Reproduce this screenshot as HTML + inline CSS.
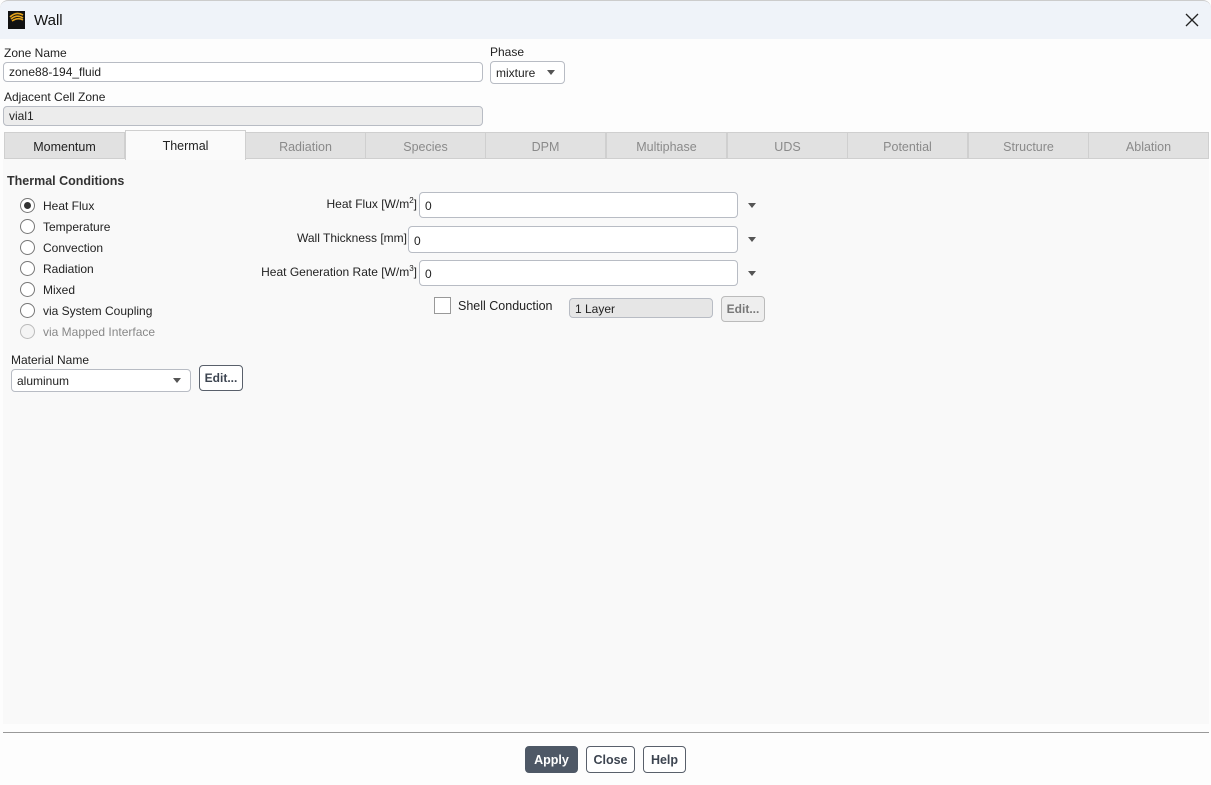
<!DOCTYPE html>
<html><head><meta charset="utf-8"><style>
*{box-sizing:border-box;margin:0;padding:0}
body{width:1211px;height:785px;overflow:hidden;background:#fdfdfd;font-family:"Liberation Sans",sans-serif;font-size:12px;color:#222;position:relative}
.a{position:absolute;white-space:nowrap}
.in{position:absolute;border:1px solid #b8bcc4;border-radius:4px;background:#fff;padding-left:5px;line-height:18px}
.tab{position:absolute;top:132px;height:27px;width:121px;border:1px solid #cfcfcf;background:#e1e1e1;color:#8a8a8a;text-align:center;line-height:29px;font-size:12.5px}
.rad{position:absolute;left:20px;width:15px;height:15px;border:1px solid #777;border-radius:50%;background:#fff}
.rl{position:absolute;left:43px}
.dd{position:absolute;width:0;height:0;border-left:4px solid transparent;border-right:4px solid transparent;border-top:5px solid #555}
.btn{position:absolute;border:1px solid #59606b;border-radius:4px;background:#fff;font-weight:bold;text-align:center;color:#3c4450;font-size:12.5px}
.lb{position:absolute;white-space:nowrap;text-align:right}
</style></head><body>
<div class="a" style="left:0;top:0;width:1211px;height:39px;background:#eff3f9;border-radius:8px 8px 0 0;border-top:1px solid #ccc"></div>
<div class="a" style="left:8px;top:11px;width:17px;height:18px;background:#111"></div>
<svg class="a" style="left:8px;top:11px" width="17" height="12"><path d="M2 6 Q8 0 15 4 M3 8 Q9 3 15 7 M4 10 Q10 6 15 9" stroke="#e3a21a" stroke-width="1.6" fill="none"/></svg>
<div class="a" style="left:34px;top:12px;font-size:15px;color:#111">Wall</div>
<svg class="a" style="left:1185px;top:13px" width="14" height="14"><path d="M1 1L13 13M13 1L1 13" stroke="#222" stroke-width="1.3"/></svg>

<div class="a" style="left:4px;top:46px">Zone Name</div>
<div class="in" style="left:3px;top:62px;width:480px;height:20px">zone88-194_fluid</div>
<div class="a" style="left:490px;top:45px">Phase</div>
<div class="in" style="left:490px;top:61px;width:75px;height:23px;line-height:23px">mixture</div>
<div class="dd" style="left:547px;top:70px"></div>
<div class="a" style="left:4px;top:90px">Adjacent Cell Zone</div>
<div class="in" style="left:3px;top:106px;width:480px;height:20px;background:#ececec">vial1</div>

<div class="a" style="left:3px;top:159px;width:1206px;height:565px;background:#f9f9f9"></div>
<div class="tab" style="left:4px;color:#222">Momentum</div>
<div class="tab" style="left:125px;top:130px;height:30px;background:#fafafa;color:#222;border-bottom:none;line-height:31px">Thermal</div>
<div class="tab" style="left:245px">Radiation</div>
<div class="tab" style="left:365px">Species</div>
<div class="tab" style="left:485px">DPM</div>
<div class="tab" style="left:606px">Multiphase</div>
<div class="tab" style="left:727px">UDS</div>
<div class="tab" style="left:847px">Potential</div>
<div class="tab" style="left:968px">Structure</div>
<div class="tab" style="left:1088px">Ablation</div>

<div class="a" style="left:7px;top:174px;font-weight:bold;font-size:12.5px;color:#333">Thermal Conditions</div>
<div class="rad" style="top:198px"><div style="position:absolute;left:3px;top:3px;width:7px;height:7px;border-radius:50%;background:#333"></div></div><div class="rl a" style="top:199px">Heat Flux</div>
<div class="rad" style="top:219px"></div><div class="rl a" style="top:220px">Temperature</div>
<div class="rad" style="top:240px"></div><div class="rl a" style="top:241px">Convection</div>
<div class="rad" style="top:261px"></div><div class="rl a" style="top:262px">Radiation</div>
<div class="rad" style="top:282px"></div><div class="rl a" style="top:283px">Mixed</div>
<div class="rad" style="top:303px"></div><div class="rl a" style="top:304px">via System Coupling</div>
<div class="rad" style="top:324px;border-color:#bbb;background:#f4f4f4"></div><div class="rl a" style="top:325px;color:#888">via Mapped Interface</div>

<div class="a" style="left:11px;top:353px">Material Name</div>
<div class="in" style="left:11px;top:369px;width:180px;height:23px;line-height:23px">aluminum</div>
<div class="dd" style="left:173px;top:378px"></div>
<div class="btn" style="left:199px;top:365px;width:44px;height:26px;line-height:25px;font-size:12px">Edit...</div>

<div class="lb" style="right:794px;top:196px">Heat Flux [W/m<sup style="font-size:8px">2</sup>]</div>
<div class="in" style="left:419px;top:192px;width:319px;height:26px;line-height:27px">0</div>
<div class="dd" style="left:748px;top:203px"></div>
<div class="lb" style="right:804px;top:231px">Wall Thickness [mm]</div>
<div class="in" style="left:408px;top:226px;width:330px;height:27px;line-height:28px">0</div>
<div class="dd" style="left:748px;top:237px"></div>
<div class="lb" style="right:794px;top:264px">Heat Generation Rate [W/m<sup style="font-size:8px">3</sup>]</div>
<div class="in" style="left:419px;top:260px;width:319px;height:26px;line-height:27px">0</div>
<div class="dd" style="left:748px;top:271px"></div>
<div class="a" style="left:434px;top:297px;width:17px;height:17px;border:1px solid #999;background:#fff"></div>
<div class="a" style="left:458px;top:299px;font-size:12.5px">Shell Conduction</div>
<div class="in" style="left:569px;top:298px;width:144px;height:20px;background:#e6e6e6;line-height:20px">1 Layer</div>
<div class="btn" style="left:721px;top:296px;width:44px;height:26px;line-height:25px;font-size:12px;border-color:#bbb;background:#eee;color:#777">Edit...</div>

<div class="a" style="left:3px;top:732px;width:1206px;height:1px;background:#999"></div>
<div class="btn" style="left:525px;top:746px;width:53px;height:27px;line-height:27px;background:#4e5866;color:#fff;border-color:#4e5866">Apply</div>
<div class="btn" style="left:586px;top:746px;width:49px;height:27px;line-height:27px">Close</div>
<div class="btn" style="left:643px;top:746px;width:43px;height:27px;line-height:27px">Help</div>
</body></html>
